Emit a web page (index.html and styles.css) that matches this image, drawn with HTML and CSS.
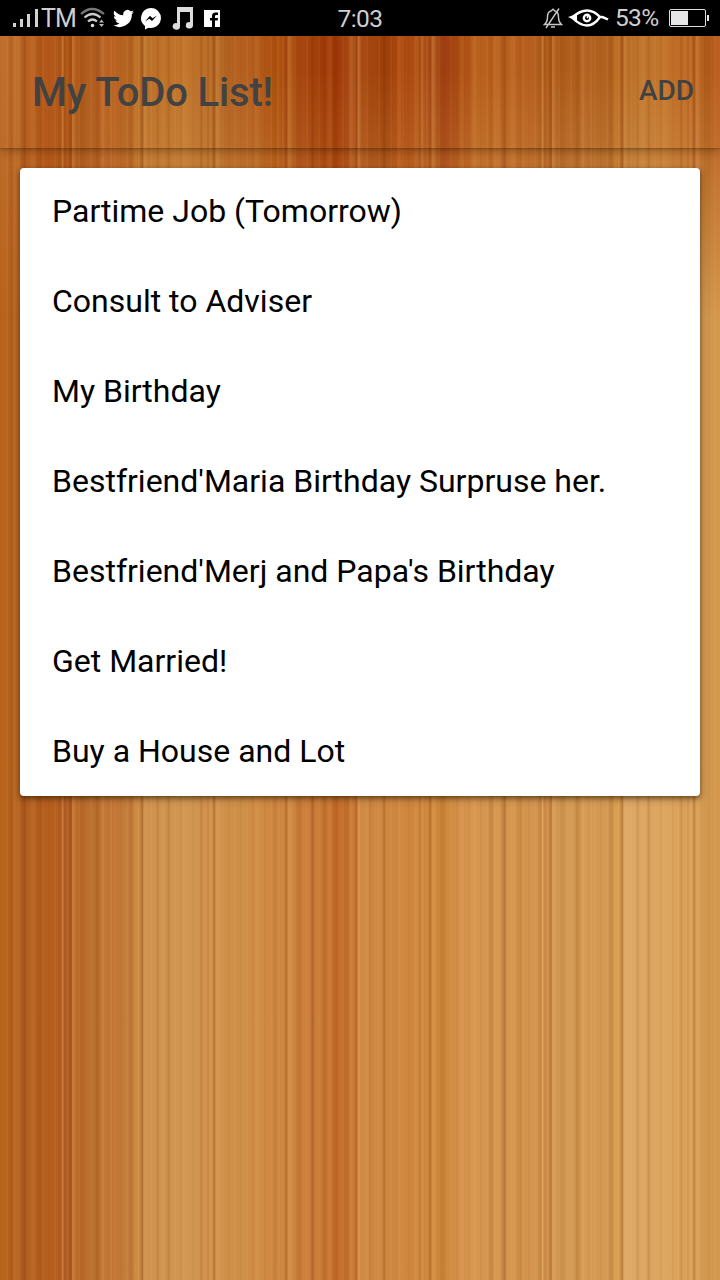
FILE: index.html
```html
<!DOCTYPE html>
<html lang="en">
<head>
<meta charset="utf-8">
<title>My ToDo List!</title>
<link rel="stylesheet" href="styles.css">
</head>
<body>
<div class="screen">
  <header class="status">
    <div class="status-left">
      <svg class="signal" width="26" height="18" viewBox="0 0 26 18" fill="#d2d2d2"><path d="M0 14h3v4H0zM7 10h3v8H7zM14 5h3v13h-3zM22 0h3v18h-3z"/></svg>
      <span class="carrier">TM</span>
      <svg class="wifi" width="26" height="22" viewBox="0 0 26 22" fill="none" stroke-width="2.2"><path stroke="#777" d="M1 7Q12 -3 24 7"/><path stroke="#ccc" d="M4.500 10.500Q12.500 3.500 20.500 10.500M8 14.500Q12.500 10.500 17 14.500"/><circle cx="12.500" cy="18.500" r="1.800" fill="#ddd"/><path fill="#bbb" d="M19 15.500l2.500-3 2.500 3zM19 17l2.500 3 2.500-3z"/></svg>
      <svg class="bird" width="21" height="19" viewBox="0 0 24 20" fill="#fff"><path d="M24 2.600a10 10 0 0 1-2.800.8A5 5 0 0 0 23.300.6a10 10 0 0 1-3.100 1.200 4.900 4.900 0 0 0-8.400 4.500A14 14 0 0 1 1.700 1.100a4.900 4.900 0 0 0 1.500 6.600A5 5 0 0 1 1 7.100a4.900 4.900 0 0 0 4 4.900 5 5 0 0 1-2.200.1 4.900 4.900 0 0 0 4.600 3.400A9.900 9.900 0 0 1 0 17.500 14 14 0 0 0 21.500 5z"/></svg>
      <svg class="messenger" width="20" height="22" viewBox="0 0 20 22"><path fill="#fff" d="M10 0a10 10 0 1 1-2.500 19.700L4 21.500v-3.600A10 10 0 0 1 10 0z"/><path fill="#000" d="M4 13.500l5-5.700 2.500 2.400L16 7.500l-5 5.600-2.600-2.400z"/></svg>
      <svg class="music" width="22" height="23" viewBox="0 0 22 23" fill="#ddd"><path d="M5 0h16v18.500a3.600 3.200 0 1 1-3-3.300V5H8v14.500a3.700 3.300 0 1 1-3-3.300z"/></svg>
      <svg class="facebook" width="16" height="17" viewBox="0 0 16 17"><path fill="#fff" d="M0 0h16v17H0z"/><path fill="#000" d="M8 17v-6.500H6V8h2V6q0-3.500 3.500-3.500H14V5h-1.700q-1.300 0-1.300 1.300V8h3l-.4 2.500H11V17z"/></svg>
    </div>
    <span class="clock">7:03</span>
    <div class="status-right">
      <svg class="bell" width="20" height="21" viewBox="0 0 20 21" fill="none" stroke="#c6c6c6" stroke-width="1.400"><path d="M1.500 16.500h17Q15.500 14 15.500 9.500 15.500 3.500 12 3L10 1.200 8 3Q4.500 3.500 4.500 9.500 4.500 14 1.500 16.500zM8 19h4M16 .5L3 20"/></svg>
      <svg class="eye" width="41" height="18" viewBox="0 0 41 18" fill="none" stroke="#fff" stroke-width="2.400"><path d="M4 8.500Q12 1.500 19 1.500 26 1.500 32 8 26 16.500 19 16.500 12 16.500 4 8.500zM30 7.500Q35 7.500 40 10.500"/><path fill="#fff" stroke="none" d="M0 8l9-3v7z"/><circle cx="19" cy="9" r="3.200"/><path stroke-width="1.500" d="M19 9l1.500-2.500"/></svg>
      <span class="percent">53%</span>
      <svg class="battery" width="40" height="18" viewBox="0 0 40 18"><rect x=".5" y=".5" width="36" height="17" rx="1.500" fill="none" stroke="#ddd"/><path fill="#e6e6e6" d="M2 2h17v14H2zM38 6h2v6h-2z"/></svg>
    </div>
  </header>
  <nav class="appbar">
    <h1 class="title">My ToDo List!</h1>
    <button class="add">ADD</button>
  </nav>
  <main class="content">
    <ul class="card">
      <li class="item">Partime Job (Tomorrow)</li>
      <li class="item">Consult to Adviser</li>
      <li class="item">My Birthday</li>
      <li class="item">Bestfriend'Maria Birthday Surpruse her.</li>
      <li class="item">Bestfriend'Merj and Papa's Birthday</li>
      <li class="item">Get Married!</li>
      <li class="item">Buy a House and Lot</li>
    </ul>
  </main>
</div>
</body>
</html>
```
FILE: styles.css
```css
* { box-sizing: border-box; }
body { margin: 0; font-family: Roboto, sans-serif; }

/* Wooden wall: light planks, a redder upper edge, fine vertical grain */
.screen {
  position: relative;
  isolation: isolate;
  display: flex;
  flex-direction: column;
  width: 720px;
  height: 1280px;
  overflow: hidden;
  background: linear-gradient(90deg,
    #b9651c 0, #b36022 25px, #b55e1d 50px, #b8622a 71px, #bc6c2c 73px, #bc7230 95px, #c37838 120px, #c88640 138px,
    #ca8c48 143px, #d09450 150px, #d09752 190px, #d0904c 215px, #ce9048 240px, #d08a44 265px, #cc8440 290px,
    #ca7c38 320px, #c66e2c 335px, #ca7a38 355px, #d08c46 362px, #ce8640 400px, #ce883c 440px,
    #d69450 470px, #d49850 500px, #d4944e 530px, #d49c56 560px, #d49a54 600px, #d49c50 622px,
    #dca968 625px, #dca560 660px, #daa45a 695px, #d09850 701px, #d4984f 720px);
}
.screen::before, .screen::after {
  content: "";
  position: absolute;
  inset: 0;
  z-index: -1;
}
.screen::before {
  background: linear-gradient(90deg,
    #c07030 0, #bc6828 20px, #b4581c 40px, #b05818 70px, #b05e20 90px, #b86022 110px, #b46820 140px,
    #bc7028 150px, #c0742c 190px, #b06420 212px, #b45e20 250px, #ac500e 275px, #a84810 300px,
    #9c3404 335px, #ac4c18 350px, #a44810 370px, #9c3e08 385px, #ac4810 400px, #ac5018 430px,
    #a03e12 445px, #a84a10 460px, #b8601c 480px, #b86020 520px, #b05c1c 550px, #af6020 600px,
    #b4641c 622px, #c07830 640px, #c07028 670px, #b86020 695px, #ac5818 705px, #bc6024 720px);
  -webkit-mask-image: linear-gradient(#000 70px, rgba(0,0,0,.75) 148px, rgba(0,0,0,.5) 200px, transparent 320px);
  mask-image: linear-gradient(#000 70px, rgba(0,0,0,.75) 148px, rgba(0,0,0,.5) 200px, transparent 320px);
}
.screen::after {
  --d: rgba(130,50,0,.13);
  --s: rgba(120,45,0,.25);
  --l: rgba(255,190,110,.12);
  --h: rgba(255,200,125,.24);
  --n: rgba(160,80,10,0);
  background:
    repeating-linear-gradient(90deg, rgba(130,50,0,.05) 0 2px, transparent 2px 6px, rgba(255,190,110,.06) 6px 8px, transparent 8px 12px),
    linear-gradient(90deg,
      var(--n) 0 8px, var(--d) 10px 12px, var(--l) 14px, var(--n) 20px, var(--s) 24px 25px, var(--n) 27px 31px,
      var(--l) 33px, var(--n) 37px, var(--d) 40px 41px, var(--n) 43px 57px, var(--d) 59px 61px, var(--h) 62px 63px,
      var(--d) 64px 67px, var(--n) 68px, var(--s) 70px 71.5px, var(--h) 72px 73px, var(--n) 76px, var(--d) 82px 83px,
      var(--n) 85px 94px, var(--d) 96px 99px, var(--l) 102px, var(--n) 108px, var(--l) 111px, var(--n) 113px 128px,
      var(--d) 130px 132px, var(--l) 134px 139px, var(--s) 142px 143px, var(--h) 144px 145px, var(--n) 148px 156px,
      var(--d) 158px, var(--n) 160px 166px, var(--d) 168px 169px, var(--n) 171px 182px, var(--l) 184px, var(--n) 186px 199px,
      var(--d) 200px 202px, var(--l) 204px 206px, var(--d) 208px, var(--l) 210px, var(--n) 212px, var(--s) 214px 215px,
      var(--h) 216px 217px, var(--n) 222px 254px, var(--l) 256px, var(--n) 259px 272px, var(--d) 275px, var(--l) 278px,
      var(--n) 280px 284px, var(--s) 286px 287px, var(--h) 288px 289px, var(--n) 294px, var(--d) 298px 300px,
      var(--n) 302px 310px, var(--s) 312px 313px, var(--n) 315px 321px, var(--d) 323px 325px, var(--l) 329px,
      var(--d) 334px 336px, var(--n) 340px, var(--d) 346px 348px, var(--l) 350px 352px, var(--s) 356px 357px,
      var(--h) 358px 359px, var(--n) 362px 368px, var(--d) 370px, var(--n) 373px 382px, var(--s) 384px, var(--n) 386px 396px,
      var(--l) 398px 400px, var(--n) 402px 414px, var(--l) 417px, var(--d) 420px, var(--h) 422px, var(--n) 424px 428px,
      var(--s) 430px 431px, var(--h) 432px 433px, var(--n) 437px, var(--d) 442px 443px, var(--n) 446px 458px,
      var(--l) 461px, var(--n) 464px 470px, var(--l) 473px, var(--n) 480px) 0 0 / 480px 100%;
}

.status {
  position: relative;
  display: flex;
  justify-content: space-between;
  height: 36px;
  padding: 0 11px 0 13px;
  background: #000;
  color: #cfcfcf;
  font-size: 24.5px;
  line-height: 38px;
}
.status-left, .status-right { display: flex; align-items: center; }
.carrier { margin-left: 2px; width: 38px; padding-top: 1px; font-size: 25px; letter-spacing: -1px; }
.wifi { margin-left: 1px; }
.bird { margin-left: 7px; }
.messenger { margin: 1px 0 0 7px; }
.music { margin-left: 11px; }
.facebook { margin-left: 10px; margin-top: 1px; }
.clock { position: absolute; left: 0; right: 0; text-align: center; letter-spacing: -.5px; }
.eye { margin-left: 5px; }
.percent { margin-left: 6px; width: 43px; letter-spacing: -.7px; }
.battery { margin-left: 11px; }

.appbar {
  display: flex;
  align-items: center;
  justify-content: space-between;
  height: 112px;
  padding: 0 26px 0 32px;
  color: #424242;
  box-shadow: 0 1px 2px rgba(60,30,0,.3), 0 4px 9px rgba(60,30,0,.3);
  clip-path: inset(0 0 -20px 0);
}
.title { margin: 2px 0 0; font-size: 40px; font-weight: 500; line-height: 48px; letter-spacing: -.15px; }
.add { padding: 0; border: 0; background: none; color: inherit; font: 500 28px/36px Roboto, sans-serif; margin-bottom: 3px; }

.content { padding: 20px; }
.card {
  display: grid;
  grid-auto-rows: 88px;
  gap: 2px;
  margin: 0;
  padding: 0 32px;
  list-style: none;
  background: #fff;
  border-radius: 4px;
  box-shadow: 0 2px 4px rgba(50,25,0,.5), 0 3px 9px rgba(50,25,0,.3);
}
.item { display: flex; align-items: center; padding-bottom: 2px; color: #000; font-size: 32px; white-space: nowrap; }
```
